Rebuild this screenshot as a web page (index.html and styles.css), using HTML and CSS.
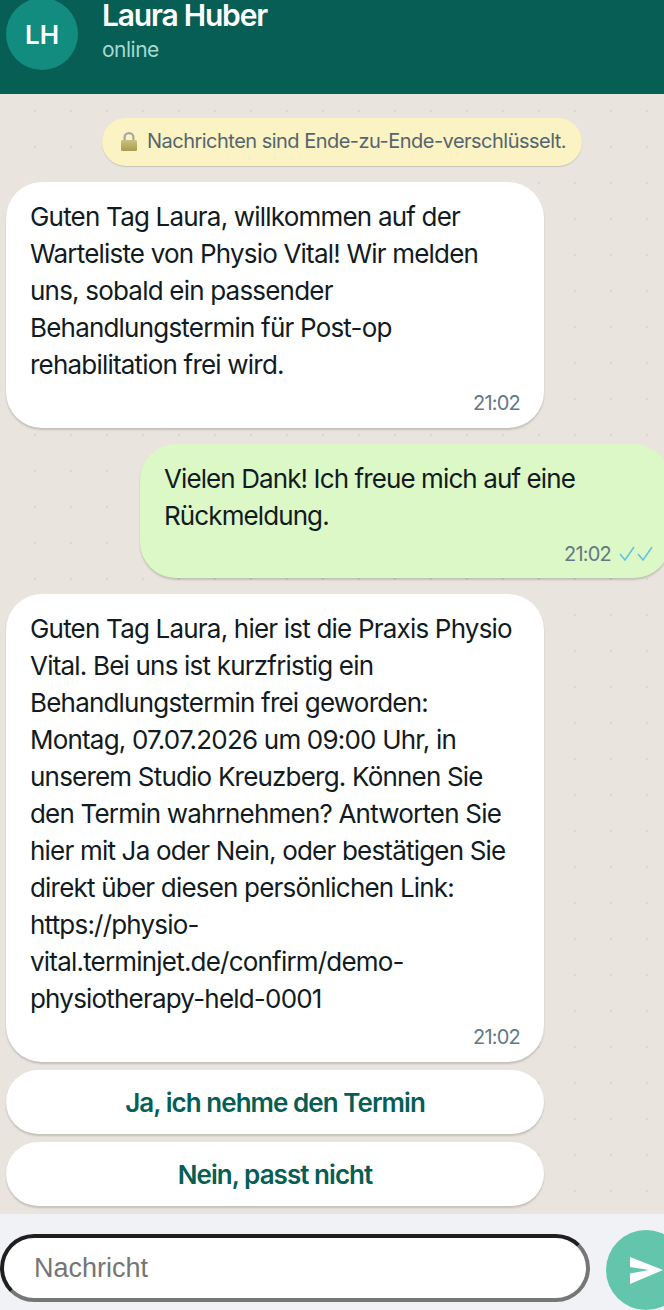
FILE: index.html
```html
<!DOCTYPE html>
<html lang="de">
<head>
    <meta charset="UTF-8">
    <meta name="viewport" content="width=device-width, initial-scale=1.0">
    <title>Laura Huber</title>
    <link rel="stylesheet" href="styles.css">
</head>
<body>
    <header class="chat-header">
        <div class="avatar">LH</div>
        <div class="contact">
            <div class="contact-name">Laura Huber</div>
            <div class="contact-status">online</div>
        </div>
    </header>

    <main class="chat-body">
        <div class="notice">
            <svg class="lock-icon" width="18" height="20" viewBox="0 0 18 20">
                <defs>
                    <linearGradient id="lockBody" x1="0" y1="0" x2="0" y2="1">
                        <stop offset="0" stop-color="#c9c183"></stop>
                        <stop offset="1" stop-color="#a89c4e"></stop>
                    </linearGradient>
                </defs>
                <path d="M3.5 10V6.5a5.5 5.5 0 0 1 11 0V10h-2.2V6.5a3.3 3.3 0 0 0-6.6 0V10z" fill="#a5a59e"></path>
                <rect x="1" y="9" width="16" height="11" rx="1.5" fill="url(#lockBody)"></rect>
            </svg>
            <span>Nachrichten sind Ende-zu-Ende-verschlüsselt.</span>
        </div>

        <div class="bubble bubble-in">
            <p class="bubble-text">Guten Tag Laura, willkommen auf der Warteliste von Physio Vital! Wir melden uns, sobald ein passender Behandlungstermin für Post-op rehabilitation frei wird.</p>
            <div class="bubble-meta">21:02</div>
        </div>

        <div class="bubble bubble-out">
            <p class="bubble-text">Vielen Dank! Ich freue mich auf eine Rückmeldung.</p>
            <div class="bubble-meta">
                21:02
                <svg class="ticks" width="34" height="16" viewBox="0 0 34 16" fill="none" stroke="#5cc3e0" stroke-width="1.5">
                    <path d="M1 8l5 6L15 1"></path>
                    <path d="M19 8l5 6L33 1"></path>
                </svg>
            </div>
        </div>

        <div class="bubble bubble-in">
            <p class="bubble-text">Guten Tag Laura, hier ist die Praxis Physio Vital. Bei uns ist kurzfristig ein Behandlungstermin frei geworden: Montag, 07.07.2026 um 09:00 Uhr, in unserem Studio Kreuzberg. Können Sie den Termin wahrnehmen? Antworten Sie hier mit Ja oder Nein, oder bestätigen Sie direkt über diesen persönlichen Link: https://physio-vital.terminjet.de/confirm/demo-physiotherapy-held-0001</p>
            <div class="bubble-meta">21:02</div>
        </div>

        <div class="quick-replies">
            <button class="quick-reply">Ja, ich nehme den Termin</button>
            <button class="quick-reply">Nein, passt nicht</button>
        </div>
    </main>

    <footer class="composer">
        <input class="composer-input" type="text" placeholder="Nachricht">
        <button class="send-button" aria-label="Senden">
            <svg width="33" height="27" viewBox="0 0 33 27">
                <path d="M0 0l33 13L0 27V16.500l19-3.500L0 10z" fill="#ffffff"></path>
            </svg>
        </button>
    </footer>
</body>
</html>
```

FILE: styles.css
```css
:root {
    --header-color: #075e54;
    --chat-color: #e9e4dd;
    --out-color: #dcf8c6;
    --meta-color: #667781;
    --text-color: #111b21;
}

html,
body {
    overflow: hidden;
}

body {
    font-family: Inter, 'Noto Sans', sans-serif;
    margin: 0;
    width: 664px;
    height: 1310px;
    display: flex;
    flex-direction: column;
    color: var(--text-color);
}

.chat-header {
    height: 94px;
    flex-shrink: 0;
    box-sizing: border-box;
    display: flex;
    align-items: flex-start;
    gap: 24px;
    padding-left: 6px;
    background-color: var(--header-color);
    color: white;
}

.avatar {
    width: 72px;
    height: 72px;
    margin-top: -2px;
    border-radius: 50%;
    background-color: #128c7e;
    display: flex;
    align-items: center;
    justify-content: center;
    font-size: 26px;
    font-weight: 600;
}

.contact-name {
    font-size: 30px;
    line-height: 30px;
    font-weight: 600;
    letter-spacing: -1.2px;
}

.contact-status {
    font-size: 21px;
    line-height: 24px;
    letter-spacing: -0.5px;
    margin-top: 8px;
    color: #a5d9cf;
}

.chat-body {
    flex: 1;
    display: flex;
    flex-direction: column;
    align-items: flex-start;
    gap: 16px;
    padding: 24px 0 8px 6px;
    box-sizing: border-box;
    background-color: var(--chat-color);
    background-image: radial-gradient(circle at 35px 17px, #dcd6ce 1.2px, transparent 1.6px);
    background-size: 36px 36px;
}

.notice {
    align-self: flex-start;
    margin-left: 96px;
    height: 48px;
    box-sizing: border-box;
    display: flex;
    align-items: center;
    gap: 9px;
    padding: 0 16px 2px 18px;
    border-radius: 24px;
    background-color: #fbf3c4;
    box-shadow: 0 1px 1px rgba(0, 0, 0, 0.15);
    font-size: 20px;
    letter-spacing: -0.52px;
    color: #54656f;
    white-space: nowrap;
}

.lock-icon {
    flex-shrink: 0;
}

.bubble {
    box-sizing: border-box;
    padding: 16px 24px 11px;
    border-radius: 36px;
    box-shadow: 0 2px 2px rgba(0, 0, 0, 0.16);
}

.bubble-in {
    width: 538px;
    background-color: white;
}

.bubble-out {
    width: 530px;
    margin-left: 134px;
    padding-bottom: 10px;
    background-color: var(--out-color);
}

.bubble-text {
    margin: 0;
    font-size: 26px;
    line-height: 37px;
    letter-spacing: -0.8px;
    overflow-wrap: anywhere;
}

.bubble-out .bubble-text {
    letter-spacing: -0.9px;
}

.bubble-meta {
    display: flex;
    justify-content: flex-end;
    align-items: center;
    gap: 8px;
    margin-top: 6px;
    font-size: 20px;
    line-height: 28px;
    letter-spacing: -0.8px;
    color: var(--meta-color);
}

.bubble-out .bubble-meta {
    margin-right: -7px;
}

.quick-replies {
    display: flex;
    flex-direction: column;
    gap: 8px;
    margin-top: -8px;
}

.quick-reply {
    width: 538px;
    height: 64px;
    border: none;
    border-radius: 32px;
    background-color: white;
    box-shadow: 0 2px 2px rgba(0, 0, 0, 0.16);
    font-family: inherit;
    font-size: 26px;
    font-weight: 600;
    letter-spacing: -0.95px;
    color: var(--header-color);
}

.composer {
    height: 96px;
    flex-shrink: 0;
    box-sizing: border-box;
    display: flex;
    gap: 16px;
    padding-top: 16px;
    background-color: #f0f2f5;
}

.composer-input {
    width: 590px;
    height: 68px;
    flex-shrink: 0;
    margin-top: 4px;
    box-sizing: border-box;
    padding: 0 30px;
    border: 4px solid;
    border-color: #1f1f1f #767676 #767676 #1f1f1f;
    border-radius: 34px;
    background-color: white;
    font-family: 'Liberation Sans', sans-serif;
    font-size: 27px;
}

.composer-input::placeholder {
    color: #757575;
}

.send-button {
    width: 80px;
    height: 80px;
    flex-shrink: 0;
    padding: 0;
    border: none;
    border-radius: 50%;
    background-color: #64c5ad;
    display: flex;
    align-items: center;
    justify-content: center;
}
```
